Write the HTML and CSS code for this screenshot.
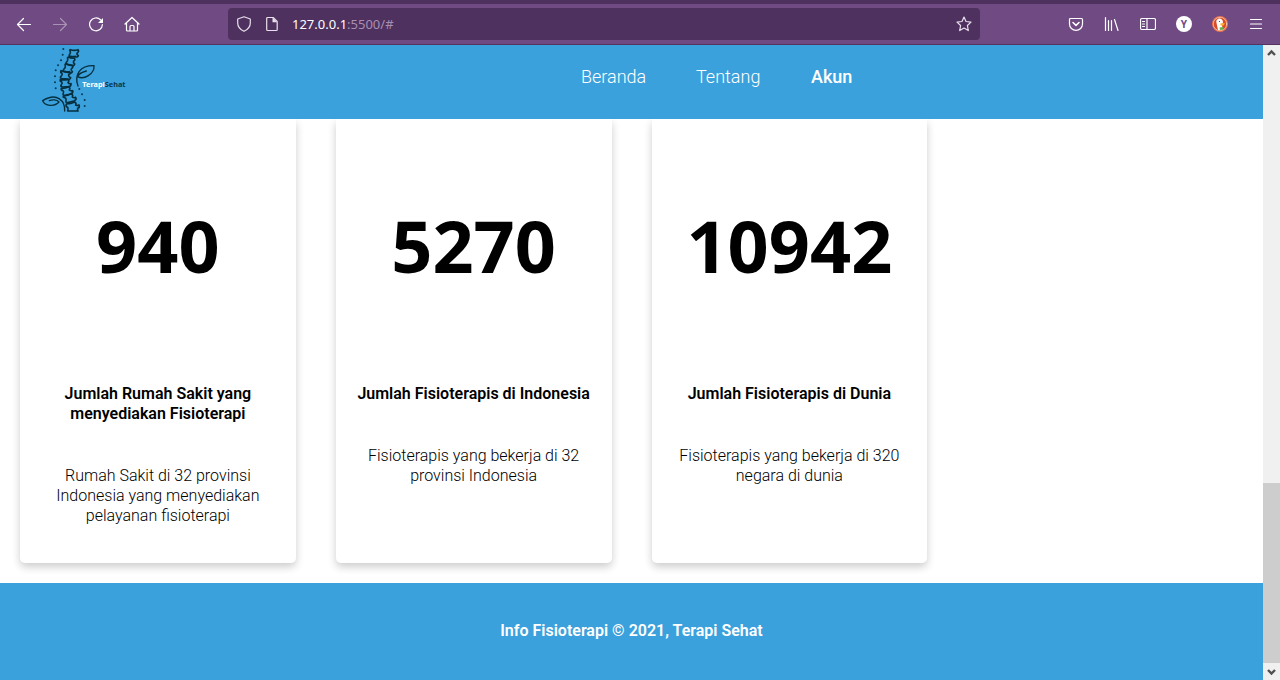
FILE: index.html
```html
<!DOCTYPE html>
<html lang="id">
<head>
<meta charset="utf-8">
<title>Terapi Sehat</title>
<link rel="stylesheet" href="styles.css">
</head>
<body>
<div class="browser">
  <div class="toolbar">
    <div class="tools">
      <button class="tool" aria-label="Back"><svg viewBox="0 0 16 16"><path d="M14.500 8.500H1.500M7.500 2.500l-6 6 6 6"/></svg></button>
      <button class="tool tool-disabled" aria-label="Forward" disabled><svg viewBox="0 0 16 16"><path d="M1.500 8.500h13M8.500 2.500l6 6-6 6"/></svg></button>
      <button class="tool" aria-label="Reload"><svg viewBox="0 0 16 16"><path d="M12.500 3.800A6.400 6.400 0 1 0 14.400 8.500"/><path class="solid" d="M15 2v5h-5z"/></svg></button>
      <button class="tool" aria-label="Home"><svg viewBox="0 0 16 16"><path d="M1 8 8 1.500 15 8M2.500 7v7q0 1 1 1h9q1 0 1-1V7M6 15v-4.500q0-1 1-1h2q1 0 1 1V15"/></svg></button>
    </div>
    <div class="address">
      <button class="address-icon" aria-label="Tracking protection"><svg viewBox="0 0 16 16"><path d="M8 .8 14.300 3v4q0 5.500-6.300 8.300Q1.700 12.500 1.700 7V3z"/></svg></button>
      <button class="address-icon" aria-label="Site information"><svg viewBox="0 0 16 16"><path d="M3.700 1.500h5.500l4 4v8q0 1-1 1H3.700q-1 0-1-1v-11q0-1 1-1z"/><path class="solid" d="M8.500 1.500v4.700h4.700z"/></svg></button>
      <div class="url" role="textbox" aria-label="Address" contenteditable="true" spellcheck="false">127.0.0.1<span class="url-rest">:5500/#</span></div>
      <button class="address-icon" aria-label="Bookmark"><svg viewBox="0 0 16 16"><path d="m8 1 2 4.500 5 .6-3.600 3.400.9 5.100L8 12.100l-4.300 2.500.9-5.100L1 6.100l5-.6z"/></svg></button>
    </div>
    <div class="tools">
      <button class="tool" aria-label="Save to Pocket"><svg viewBox="0 0 16 16"><path d="M2.500 2.500h11q1 0 1 1V8a6.500 6.300 0 0 1-13 0V3.500q0-1 1-1z"/><path class="bold" d="M5 6.500l3 2.800 3-2.800"/></svg></button>
      <button class="tool" aria-label="Library"><svg viewBox="0 0 16 16"><path d="M1.500 1.500v13M4.500 4.500v10M7.500 4.500v10M10.500 3.500l3.500 11"/></svg></button>
      <button class="tool" aria-label="Sidebars"><svg viewBox="0 0 16 16"><path d="M2 2.500h12q1.500 0 1.500 1.500v8q0 1.500-1.500 1.500H2Q.5 13.500.5 12V4Q.5 2.500 2 2.500zM7 2.500v11M2.500 5.500h2M2.500 8h2M2.500 10.500h2"/></svg></button>
      <button class="tool" aria-label="Account"><span class="avatar">Y</span></button>
      <button class="tool" aria-label="DuckDuckGo"><svg viewBox="0 0 16 16"><circle cx="8" cy="8" r="8" fill="#e8704a" stroke="none"/><circle cx="8" cy="8" r="6.700" fill="#d94b26" stroke="#f8c9b4" stroke-width=".8"/><path d="M6 14 4.300 6q-.2-3 2.700-3.500 3.500-.2 4 3.500l-.9 3 .4 4.700z" fill="#fff" stroke="none"/><path d="M8.500 7.300H13l-1.500 2.200h-3z" fill="#fdb321" stroke="none"/><path d="M7.500 11.500 11.500 11v2.500l-3.500.5z" fill="#63b34b" stroke="none"/><circle cx="7.500" cy="5.500" r=".6" fill="#345" stroke="none"/></svg></button>
      <button class="tool" aria-label="Menu"><svg viewBox="0 0 16 16"><path d="M2.500 3.500h11M2.500 8h11M2.500 12.500h11"/></svg></button>
    </div>
  </div>
</div>
<div class="viewport">
  <div class="page">
    <header class="header">
      <a class="logo" href="#" aria-label="Terapi Sehat">
        <svg viewBox="60 15 264 213" width="88" height="71">
          <g fill="none" stroke="#062f3e" stroke-width="5" stroke-linejoin="round" stroke-linecap="round">
            <path d="M151 29q12 4 23 0q4 6-2 9q-3 5 3 9q-3 7-9 2q-7 2-13 0q-7 1-5-5q5-6 3-10q-4-2 0-5z"/>
            <path d="M145 51q10 5 18 3q4 7-2 9q-2 6 3 9q-2 7-9 4l-12-3q-7 0-4-6q5-4 4-9q-2-4 2-7z"/>
            <path d="M137 71q11 6 20 5q4 7-3 10q-2 5 3 9q-3 7-9 3l-14-3q-6-1-3-7q6-4 5-10q-2-4 1-7z"/>
            <path d="M123 92q14 5 26 3q4 7-3 9q-1 6 6 9q-3 7-9 4l-17-1q-8-2-3-7q5-4 3-9q-6-3-3-8z"/>
            <path d="M121 119q13 2 23-1q5 5 0 9q2 5 9 4q1 8-7 9l-18 1q-8-1-4-7q4-5 1-9q-6-1-4-6z"/>
            <path d="M124 145q13 0 22-5q6 4 2 10q4 4 10 2q2 8-6 10l-17 4q-8 0-5-7q2-5-2-8q-6-1-4-6z"/>
            <path d="M130 168q14 0 24-7q6 4 3 10q4 4 10 1q4 7-5 11l-18 5q-8 1-6-7q1-6-3-8q-7 0-5-5z"/>
            <path d="M139 192q14 0 25-6q6 4 3 9q5 3 10 0q3 7-4 10q-1 5 1 8h-31q2-7 0-11q-7-2-4-10z"/>
            <path stroke-width="4" d="M174 138C162 103 180 76 222 77C224 103 191 120 173 110C176 101 188 96 199 93"/>
            <path stroke-width="4" d="M134 213C136 184 112 155 68 182C75 199 103 201 117 186C110 179 97 178 88 182"/>
          </g>
          <g fill="#08384c"><circle cx="130" cy="27" r="3"/><circle cx="128" cy="44" r="3"/><circle cx="123" cy="61" r="3"/><circle cx="114" cy="76" r="3"/><circle cx="107" cy="91" r="3"/><circle cx="105" cy="109" r="3"/><circle cx="105" cy="127" r="3"/><circle cx="107" cy="145" r="3"/><circle cx="178" cy="147" r="3"/><circle cx="186" cy="163" r="3"/><circle cx="194" cy="180" r="3"/><circle cx="194" cy="198" r="3"/></g>
          <text class="logo-text" x="187" y="140" fill="#fff">Terapi<tspan fill="#08384c">Sehat</tspan></text>
        </svg>
      </a>
      <nav class="nav">
        <a href="#">Beranda</a>
        <a href="#">Tentang</a>
        <a class="nav-account" href="#">Akun</a>
      </nav>
    </header>
    <main class="cards">
      <article class="card"><p class="number">940</p><h4>Jumlah Rumah Sakit yang menyediakan Fisioterapi</h4><p>Rumah Sakit di 32 provinsi Indonesia yang menyediakan pelayanan fisioterapi</p></article>
      <article class="card"><p class="number">5270</p><h4>Jumlah Fisioterapis di Indonesia</h4><p>Fisioterapis yang bekerja di 32 provinsi Indonesia</p></article>
      <article class="card"><p class="number">10942</p><h4>Jumlah Fisioterapis di Dunia</h4><p>Fisioterapis yang bekerja di 320 negara di dunia</p></article>
    </main>
    <footer class="footer">Info Fisioterapi © 2021, Terapi Sehat</footer>
  </div>
  <div class="scrollbar">
    <button class="scroll-button" aria-label="Scroll up"><svg viewBox="0 0 17 17"><path d="M5 10 8.500 6.500l3.500 3.500"/></svg></button>
    <div class="track"><div class="thumb"></div></div>
    <button class="scroll-button" aria-label="Scroll down"><svg viewBox="0 0 17 17"><path d="M5 7l3.500 3.500L12 7"/></svg></button>
  </div>
</div>
</body>
</html>
```
FILE: styles.css
```css
* { box-sizing: border-box; }
body {
  margin: 0;
  min-height: 100vh;
  display: flex;
  flex-direction: column;
  background: #fff;
  color: #000;
  font: 16px/20px Roboto, sans-serif;
}
button {
  padding: 0;
  border: 0;
  background: none;
  color: inherit;
  font: inherit;
}
.browser {
  border-top: 4px solid #4e315e;
  border-bottom: 1px solid #55325f;
  background: #704b83;
  color: #fff;
}
.toolbar {
  display: flex;
  align-items: center;
  height: 40px;
  padding: 0 6px;
}
.tools { display: flex; }
.tool {
  display: grid;
  place-items: center;
  width: 36px;
  height: 32px;
}
.tool-disabled { opacity: 0.4; }
.tool svg, .address-icon svg {
  display: block;
  width: 16px;
  height: 16px;
  fill: none;
  stroke: currentColor;
  stroke-width: 1.2;
  stroke-linecap: round;
  stroke-linejoin: round;
}
.tool .solid, .address-icon .solid { fill: currentColor; stroke: none; }
.tool .bold { stroke-width: 1.6; }
.avatar {
  width: 16px;
  height: 16px;
  border-radius: 50%;
  background: #fff;
  color: #704b83;
  font: bold 10px/16px "Noto Sans", sans-serif;
}
.address {
  flex: 1;
  display: flex;
  align-items: center;
  height: 32px;
  margin: 0 78px;
  padding: 0 8px;
  gap: 12px;
  border-radius: 4px;
  background: #4e315e;
}
.address-icon { color: #e8e0ec; }
.url {
  flex: 1;
  outline: 0;
  font: 13px/20px "Noto Sans", sans-serif;
}
.url-rest { color: #a78fb3; }
.viewport { flex: 1; display: flex; }
.page {
  flex: 1;
  display: flex;
  flex-direction: column;
}
.header {
  display: grid;
  grid-template-columns: 46fr 54fr;
  align-items: center;
  height: 74px;
  background: #3aa1dc;
}
.logo {
  align-self: start;
  justify-self: start;
  padding-left: 40px;
}
.logo svg { display: block; }
.logo-text { font: bold 22px "Noto Sans", sans-serif; }
.nav {
  display: grid;
  grid-template-columns: repeat(3, 115px);
  padding-bottom: 10px;
}
.nav a {
  color: #fff;
  font-size: 18px;
  font-weight: 300;
  text-decoration: none;
}
.nav .nav-account { font-weight: 500; }
.cards {
  display: grid;
  grid-template-columns: repeat(4, 1fr);
  overflow: hidden;
}
.card {
  margin: 0 20px 20px;
  padding: 78px 20px 37px;
  border-radius: 0 0 5px 5px;
  box-shadow: 0 4px 8px rgba(0, 0, 0, 0.2);
  font-weight: 300;
  text-align: center;
}
.card p { margin: 0; }
.card .number {
  font: bold 72px/96px "Noto Sans", sans-serif;
}
.card h4 {
  margin: 91px 0 42px;
  font-size: 16px;
  font-weight: 600;
}
.footer {
  flex: 1;
  padding: 38px 20px;
  background: #3aa1dc;
  color: #fff;
  font-weight: 600;
  text-align: center;
}
.scrollbar {
  display: flex;
  flex-direction: column;
  width: 17px;
  background: #f0f0f0;
}
.scroll-button { height: 17px; }
.scroll-button svg {
  display: block;
  fill: none;
  stroke: #505050;
  stroke-width: 2.4;
}
.track {
  flex: 1;
  display: flex;
  flex-direction: column;
  justify-content: flex-end;
}
.thumb { height: 30%; background: #cdcdcd; }
```
